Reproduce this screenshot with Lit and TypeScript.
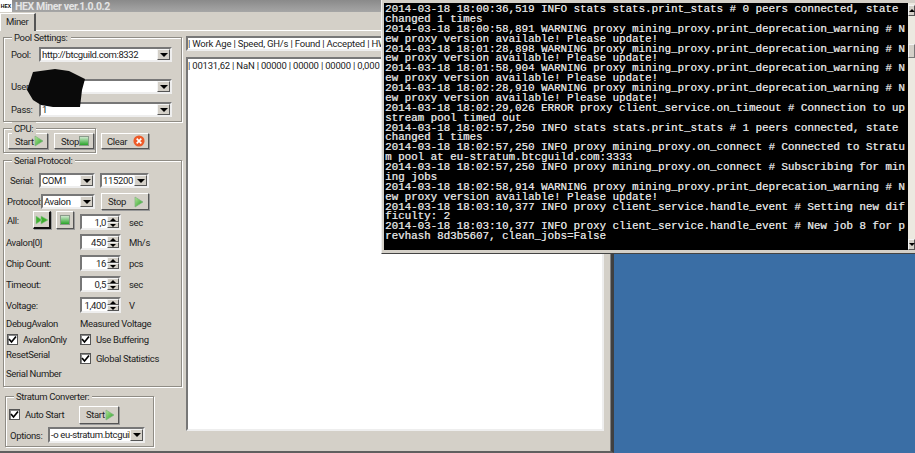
import { LitElement, html, css } from "lit";
import { customElement } from "lit/decorators.js";

const LOG = `2014-03-18 18:00:36,519 INFO stats stats.print_stats # 0 peers connected, state
changed 1 times
2014-03-18 18:00:58,891 WARNING proxy mining_proxy.print_deprecation_warning # N
ew proxy version available! Please update!
2014-03-18 18:01:28,898 WARNING proxy mining_proxy.print_deprecation_warning # N
ew proxy version available! Please update!
2014-03-18 18:01:58,904 WARNING proxy mining_proxy.print_deprecation_warning # N
ew proxy version available! Please update!
2014-03-18 18:02:28,910 WARNING proxy mining_proxy.print_deprecation_warning # N
ew proxy version available! Please update!
2014-03-18 18:02:29,026 ERROR proxy client_service.on_timeout # Connection to up
stream pool timed out
2014-03-18 18:02:57,250 INFO stats stats.print_stats # 1 peers connected, state
changed 1 times
2014-03-18 18:02:57,250 INFO proxy mining_proxy.on_connect # Connected to Stratu
m pool at eu-stratum.btcguild.com:3333
2014-03-18 18:02:57,250 INFO proxy mining_proxy.on_connect # Subscribing for min
ing jobs
2014-03-18 18:02:58,914 WARNING proxy mining_proxy.print_deprecation_warning # N
ew proxy version available! Please update!
2014-03-18 18:03:10,377 INFO proxy client_service.handle_event # Setting new dif
ficulty: 2
2014-03-18 18:03:10,377 INFO proxy client_service.handle_event # New job 8 for p
revhash 8d3b5607, clean_jobs=False`;

const play = html`<svg class="ico" width="10" height="12" viewBox="0 0 10 12">
  <defs><linearGradient id="g" x1="0" x2="1" y1="0" y2="1"><stop offset="0" stop-color="#b6e89a"/><stop offset="1" stop-color="#1f9a1f"/></linearGradient></defs>
  <path d="M1 1 L9 6 L1 11 Z" fill="url(#g)" stroke="#7fb27f" stroke-width=".7"/></svg>`;
const dplay = html`<svg class="ico" width="14" height="10" viewBox="0 0 14 10">
  <path d="M1 1 L7 5 L1 9 Z M6 1 L13 5 L6 9 Z" fill="#3fae2f" stroke="#8cc88c" stroke-width=".6"/></svg>`;
const stop = html`<svg class="ico" width="10" height="10" viewBox="0 0 10 10">
  <defs><linearGradient id="s" x1="0" x2="0" y1="0" y2="1"><stop offset="0" stop-color="#d8ecd8"/><stop offset="1" stop-color="#1f9f1f"/></linearGradient></defs>
  <rect x=".5" y=".5" width="9" height="9" fill="url(#s)" stroke="#8a9a8a"/></svg>`;
const clear = html`<svg class="ico" width="12" height="12" viewBox="0 0 13 13">
  <circle cx="6.5" cy="6.5" r="6" fill="#ee5a28"/>
  <path d="M4 4 L9 9 M9 4 L4 9" stroke="#fff" stroke-width="1.8"/></svg>`;
const tick = html`<svg width="9" height="9" viewBox="0 0 9 9"><path d="M1 4 L3.5 7 L8 1.5" fill="none" stroke="#000" stroke-width="1.7"/></svg>`;

const combo = (value: string, cls: string) => html`<div class="sunken combo ${cls}">
  <span class="val">${value}</span><span class="drop"><i class="down"></i></span></div>`;
const spin = (value: string) => html`<div class="sunken spin"><span class="num">${value}</span>
  <span class="arrows"><span class="sb"><i class="up"></i></span><span class="sb"><i class="down small"></i></span></span></div>`;
const btn = (label: string, icon: unknown, cls = "") => html`<div class="btn ${cls}"><span>${label}</span>${icon}</div>`;
const check = (label: string) => html`<div class="chk"><span class="box">${tick}</span><span>${label}</span></div>`;
const unitRow = (label: string, value: string, unit: string) => html`<div class="urow">
  <span class="ulabel">${label}</span>${spin(value)}<span class="unit">${unit}</span></div>`;

@customElement("app-root")
export class AppRoot extends LitElement {
  static styles = css`
    :host { display: block; width: 915px; height: 453px; position: relative; overflow: hidden;
      background: #3a6ea5; font: 9.5px Roboto, "Liberation Sans", sans-serif; letter-spacing: -0.35px; color: #222; }
    * { box-sizing: border-box; }
    .win { width: 614px; height: 453px; display: flex; flex-direction: column; background: #d4d0c8;
      border-right: 3px solid #404040; border-bottom: 2px solid #606060; box-shadow: inset -1px 0 #808080; }
    .title { height: 12px; flex: none; display: flex; align-items: center; gap: 3px;
      background: linear-gradient(#8a8a8a, #a6a6a6); color: #e4e4e4; font-weight: bold; font-size: 10.5px; letter-spacing: -0.38px; }
    .hex { width: 12px; height: 12px; background: #fff; color: #000; font-size: 5px; line-height: 12px; letter-spacing: 0; text-align: center; overflow: hidden; font-family: "Liberation Sans", sans-serif; }
    .tabs { height: 18px; flex: none; display: flex; align-items: flex-end; }
    .tab { width: 36px; height: 18px; padding: 2px 0 0 5px; background: #d4d0c8; border-top: 1px solid #fff; border-left: 1px solid #fff;
      border-right: 2px solid #555; position: relative; top: 1px; z-index: 1; }
    .pane { flex: 1; display: flex; border-top: 1px solid #fff; min-height: 0; margin-right: 7px; }
    .left { width: 186px; flex: none; padding: 6px 0 0 3px; display: flex; flex-direction: column; }
    .right { flex: 1; display: flex; flex-direction: column; padding-top: 5px; min-width: 0; letter-spacing: -0.2px; }
    .group { position: relative; border: 1px solid #8f8c85; box-shadow: 1px 1px #fff, inset 1px 1px #fff; }
    .legend { position: absolute; top: -7px; left: 8px; padding: 0 3px 0 2px; background: #d4d0c8; line-height: 13px; white-space: nowrap; }
    .pool { width: 179px; height: 85px; padding: 9px 0 0 0; display: flex; flex-direction: column; }
    .prow { display: flex; align-items: center; height: 15px; }
    .prow span.l { width: 35px; padding-left: 7px; white-space: nowrap; flex: none; }
    .prow.u { margin-top: 17px; }
    .prow.p { margin-top: 8px; }
    .cpurow { display: flex; align-items: flex-start; margin-top: 6px; }
    .cpu { width: 93px; height: 25px; padding: 4px 0 0 4px; display: flex; gap: 6px; }
    .cpurow > .btn { margin: 5px 0 0 5px; }
    .serial { width: 179px; height: 227px; margin-top: 7px; padding: 12px 0 0 2px; display: flex; flex-direction: column; }
    .srow { display: flex; align-items: center; height: 15px; }
    .srow .l { width: 33px; padding-left: 4px; flex: none; white-space: nowrap; }
    .srow.proto { margin-top: 5px; height: 17px; }
    .srow.proto .l { padding-left: 1px; }
    .srow.all { margin-top: 1px; height: 18px; }
    .srow.all .l { width: 27px; padding-left: 1px; }
    .urow { display: flex; align-items: center; height: 16px; margin-top: 5px; }
    .ulabel { width: 74px; flex: none; white-space: nowrap; }
    .unit { margin-left: 8px; }
    .spin { width: 41px; height: 16px; flex: none; display: flex; }
    .num { flex: 1; text-align: right; padding-right: 1px; line-height: 13px; }
    .arrows { width: 12px; flex: none; display: flex; flex-direction: column; }
    .sb { flex: 1; background: #d4d0c8; border: 1px solid; border-color: #f4f4f4 #555 #555 #f4f4f4; display: flex; align-items: center; justify-content: center; }
    .up { border: 3px solid transparent; border-bottom-color: #000; border-top: 0; }
    .down { border: 4px solid transparent; border-top-color: #000; border-bottom: 0; }
    .down.small { border-width: 3px; border-bottom: 0; }
    .cols { display: flex; margin-top: 3px; }
    .cl { width: 74px; flex: none; }
    .cl .chk { margin-left: 1px; }
    .cr { flex: 1; }
    .cl > div, .cr > div { white-space: nowrap; }
    .t { height: 15px; line-height: 15px; }
    .chk { display: flex; align-items: center; height: 15px; }
    .cols .chk.first { margin-top: 1px; }
    .box { width: 11px; height: 11px; flex: none; margin-right: 5px; background: #fff; border: 1px solid #555;
      box-shadow: inset 1px 1px #888; display: flex; align-items: center; justify-content: center; }
    .mt4 { margin-top: 4px; }
    .stratum { width: 149px; height: 51px; margin: 9px 0 0 2px; padding: 8px 0 0 3px; display: flex; flex-direction: column; }
    .strow { display: flex; align-items: center; height: 19px; }
    .strow .chk { width: 70px; }
    .oprow { display: flex; align-items: center; height: 16px; margin-top: 3px; }
    .oprow .l { width: 39px; padding-left: 1px; flex: none; }
    .sunken { background: #fff; border: 2px solid; border-color: #777 #eee #eee #777; }
    .combo { height: 15px; display: flex; align-items: stretch; flex: none; overflow: hidden; }
    .oprow .combo { height: 16px; }
    .val { flex: 1; min-width: 0; padding-left: 1px; line-height: 12px; white-space: nowrap; overflow: hidden; }
    .drop { width: 13px; flex: none; background: #d4d0c8; border: 1px solid; border-color: #f4f4f4 #555 #555 #f4f4f4; display: flex; align-items: center; justify-content: center; }
    .w133 { width: 133px; }
    .w56 { width: 56px; }
    .w48 { width: 49px; margin-left: 5px; }
    .w54 { width: 54px; margin-left: 2px; }
    .w97 { width: 97px; }
    .btn { width: 40px; height: 16px; flex: none; display: flex; align-items: center; justify-content: space-between; padding: 0 4px 0 6px;
      background: #d4d0c8; border: 1px solid; border-color: #fff #555 #555 #fff; box-shadow: 1px 1px #999; }
    .btn.wide { width: 48px; padding: 0 3px 0 5px; }
    .strow .btn { height: 18px; }
    .proto .btn { margin-left: 6px; height: 17px; padding: 0 4px 0 6px; }
    .btn.icon { width: 18px; height: 18px; padding: 0; justify-content: center; margin-right: 5px; }
    .btn.icon.pressed { border-color: #fff #111 #111 #fff; border-width: 1px 2px 2px 1px; }
    .spinwrap { margin: 3px 0 0 1px; display: flex; align-items: center; align-self: flex-start; }
    .ico { flex: none; display: block; }
    .hdr { height: 15px; flex: none; white-space: nowrap; overflow: hidden; line-height: 12px; }
    .list { flex: 1; margin: 6px 0 20px; white-space: nowrap; overflow: hidden; line-height: 14px; }
    .console { position: absolute; left: 381px; top: 0; width: 534px; height: 254px; background: #d4d0c8; padding: 3px 0 3px 2px;
      border-left: 1px solid #eee; border-bottom: 1px solid #444; display: flex; letter-spacing: 0; }
    .screen { flex: 1; background: #000; color: #e2e2e2; margin: 0; padding: 2px 0 0 1px; font: 10.83px/9.87px "Liberation Mono", monospace; text-shadow: 0.4px 0 #a8a8a8; overflow: hidden; white-space: pre; }
    .cbar { width: 7px; flex: none; background: #ece9e0; display: flex; flex-direction: column; padding-top: 2px; }
    .cbar .sb { flex: none; height: 11px; }
    .cbar .gap { height: 28px; flex: none; }
    .cbar .fill { flex: 1; }
    .cbar .thumb { height: 14px; flex: none; background: #d4d0c8; border: 1px solid; border-color: #f4f4f4 #777 #777 #f4f4f4; }
    .blob { position: absolute; left: 24px; top: 68px; }
  `;

  render() {
    return html`
      <div class="win">
        <div class="title"><span class="hex">HEX</span><span>HEX Miner ver.1.0.0.2</span></div>
        <div class="tabs"><div class="tab">Miner</div></div>
        <div class="pane">
          <div class="left">
            <div class="group pool">
              <span class="legend">Pool Settings:</span>
              <div class="prow"><span class="l">Pool:</span>${combo("http://btcguild.com:8332", "w133")}</div>
              <div class="prow u"><span class="l">User:</span>${combo("", "w133")}</div>
              <div class="prow p"><span class="l">Pass:</span>${combo("1", "w133")}</div>
            </div>
            <div class="cpurow">
              <div class="group cpu">
                <span class="legend">CPU:</span>
                ${btn("Start", play)}${btn("Stop", stop)}
              </div>
              ${btn("Clear", clear, "wide")}
            </div>
            <div class="group serial">
              <span class="legend">Serial Protocol:</span>
              <div class="srow"><span class="l">Serial:</span>${combo("COM1", "w56")}${combo("115200", "w48")}</div>
              <div class="srow proto"><span class="l">Protocol:</span>${combo("Avalon", "w54")}${btn("Stop", play, "wide")}</div>
              <div class="srow all"><span class="l">All:</span>
                ${btn("", dplay, "icon pressed")}${btn("", stop, "icon")}
                <span class="spinwrap">${spin("1,0")}<span class="unit">sec</span></span></div>
              ${unitRow("Avalon[0]", "450", "Mh/s")}
              ${unitRow("Chip Count:", "16", "pcs")}
              ${unitRow("Timeout:", "0,5", "sec")}
              ${unitRow("Voltage:", "1,400", "V")}
              <div class="cols">
                <div class="cl">
                  <div class="t">DebugAvalon</div>
                  <div class="chk first"><span class="box">${tick}</span><span>AvalonOnly</span></div>
                  <div class="t">ResetSerial</div>
                  <div class="t mt4">Serial Number</div>
                </div>
                <div class="cr">
                  <div class="t">Measured Voltage</div>
                  <div class="chk first"><span class="box">${tick}</span><span>Use Buffering</span></div>
                  <div class="chk mt4"><span class="box">${tick}</span><span>Global Statistics</span></div>
                </div>
              </div>
            </div>
            <div class="group stratum">
              <span class="legend">Stratum Converter:</span>
              <div class="strow">${check("Auto Start")}${btn("Start", play)}</div>
              <div class="oprow"><span class="l">Options:</span>${combo("-o eu-stratum.btcguild.com:3333", "w97")}</div>
            </div>
          </div>
          <div class="right">
            <div class="sunken hdr">| Work Age | Speed, GH/s | Found | Accepted | HW Errors | Utility</div>
            <div class="sunken list">| 00131,62 | NaN | 00000 | 00000 | 00000 | 0,000 | 0,000</div>
          </div>
        </div>
      </div>
      <svg class="blob" width="66" height="42" viewBox="0 0 66 42">
        <path d="M9 4 L31 1 L45 3 L61 11 L58 22 L56 39 L29 39 L17 37 L9 32 L3 22 Z" fill="#0a0a0a"/>
      </svg>
      <div class="console">
        <pre class="screen">${LOG}</pre>
        <div class="cbar"><span class="sb"><i class="up"></i></span><span class="gap"></span><span class="thumb"></span><span class="fill"></span><span class="sb"><i class="down small"></i></span></div>
      </div>
    `;
  }
}
